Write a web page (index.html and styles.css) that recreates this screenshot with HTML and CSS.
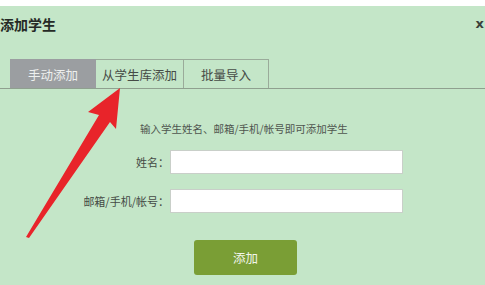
FILE: index.html
```html
<!DOCTYPE html>
<html>
<head>
<meta charset="utf-8">
<link rel="stylesheet" href="styles.css">
</head>
<body>
<div class="topstrip"></div>
<div class="dialog">
  <div class="header">
    <div class="title">添加学生</div>
    <div class="close">x</div>
  </div>
  <div class="tabs">
    <div class="tab active">手动添加</div>
    <div class="tab">从学生库添加</div>
    <div class="tab">批量导入</div>
  </div>
  <div class="body">
    <div class="hint">输入学生姓名、邮箱/手机/帐号即可添加学生</div>
    <div class="form">
      <label class="lbl">姓名：</label>
      <div class="input"></div>
      <label class="lbl">邮箱/手机/帐号：</label>
      <div class="input"></div>
    </div>
    <div class="actions">
      <div class="btn">添加</div>
    </div>
  </div>
  <svg class="arrow" width="485" height="285" viewBox="0 0 485 285">
    <path d="M120 88 L88 112 L99 115 L26 237 L29 238 L110 122 L116 129 Z" fill="#e8242a"/>
  </svg>
</div>
</body>
</html>
```

FILE: styles.css
```css
html, body {
  margin: 0;
  padding: 0;
}
body {
  width: 485px;
  height: 285px;
  overflow: hidden;
  font-family: "Noto Sans CJK SC", "Noto Sans", sans-serif;
  background: #c4e6c8;
}
.topstrip {
  height: 6px;
  background: #ffffff;
}
.dialog {
  position: relative;
  height: 279px;
  background: #c4e6c8;
}
.header {
  display: flex;
  justify-content: space-between;
  align-items: center;
  height: 34px;
}
.title {
  font-size: 14px;
  font-weight: bold;
  color: #262a26;
  margin-top: 2px;
}
.close {
  font-family: "DejaVu Sans", sans-serif;
  font-weight: bold;
  font-size: 13px;
  color: #3a3f3a;
  margin-right: 1px;
  margin-top: 1px;
}
.tabs {
  display: flex;
  margin-top: 19px;
  padding-left: 10px;
  border-bottom: 1px solid #8fa08f;
  height: 29px;
}
.tab {
  box-sizing: border-box;
  height: 29px;
  border: 1px solid #9aab9a;
  border-bottom: none;
  border-left: none;
  display: flex;
  align-items: center;
  justify-content: center;
  font-size: 12.5px;
  color: #464b46;
  width: 88px;
}
.tab:first-child {
  width: 86px;
  border-left: 1px solid #9aab9a;
}
.tab:last-child {
  width: 85px;
}
.tab.active {
  background: #9b9ea1;
  color: #eef0ef;
  border-color: #9b9ea1;
}
.body {
  padding-top: 32px;
}
.hint {
  font-size: 10.5px;
  color: #4f554f;
  padding-left: 140px;
  height: 20px;
}
.form {
  display: grid;
  grid-template-columns: 170px 233px;
  row-gap: 15px;
  margin-top: 9px;
  align-items: center;
}
.lbl {
  text-align: right;
  font-size: 11px;
  color: #454a45;
  padding-right: 1px;
}
.input {
  height: 22px;
  background: #ffffff;
  border: 1px solid #c9cfc9;
}
.actions {
  display: flex;
  padding-left: 194px;
  margin-top: 27px;
}
.btn {
  width: 103px;
  height: 35px;
  background: #7a9e35;
  border-radius: 3px;
  color: #f2f5ea;
  font-size: 12.5px;
  display: flex;
  align-items: center;
  justify-content: center;
}
.arrow {
  position: absolute;
  left: 0;
  top: -6px;
  pointer-events: none;
}
```
